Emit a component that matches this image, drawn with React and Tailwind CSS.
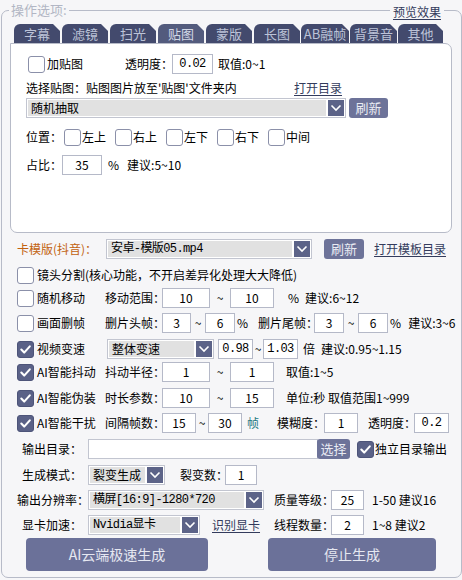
import React from "react";

const SANS = "font-['Noto_Sans_CJK_SC','Noto_Sans',sans-serif]";
const MONO = "font-['Liberation_Mono','Noto_Sans_CJK_SC',monospace] tracking-[-0.6px]";

function Check({ checked }) {
  if (checked) {
    return (
      <span className="flex h-[17px] w-[17px] shrink-0 items-center justify-center rounded-[3px] border border-[#4d5479] bg-[#5a6187]">
        <svg width="13" height="13" viewBox="0 0 13 13">
          <path d="M2.3 6.6 L5.2 9.6 L10.8 3.4" fill="none" stroke="#ffffff" strokeWidth="2.1" strokeLinecap="round" strokeLinejoin="round" />
        </svg>
      </span>
    );
  }
  return <span className="h-[17px] w-[17px] shrink-0 rounded-[3px] border-[1.5px] border-[#8b90a9] bg-white" />;
}

function Field({ w, mono, children }) {
  return (
    <span className={`flex h-[20px] shrink-0 items-center justify-center border border-[#b5b9c8] bg-white text-[12px] text-black ${w} ${mono ? MONO : ""}`}>
      {children}
    </span>
  );
}

function Chevron() {
  return (
    <svg width="12" height="8" viewBox="0 0 12 8">
      <path d="M1.5 1.5 L6 6 L10.5 1.5" fill="none" stroke="#ffffff" strokeWidth="1.6" />
    </svg>
  );
}

function Select({ w, mono, children }) {
  return (
    <span className={`flex h-[20px] shrink-0 border border-[#c2c5d0] bg-white p-px ${w}`}>
      <span className={`flex flex-1 items-center overflow-hidden bg-[#e1e1e1] pl-[3px] text-[12px] text-black ${mono ? MONO : ""}`}>
        {children}
      </span>
      <span className="ml-[2px] flex w-[16px] items-center justify-center bg-[#5c6388]">
        <Chevron />
      </span>
    </span>
  );
}

function SmallBtn({ w, children }) {
  return (
    <span className={`flex h-[20px] shrink-0 items-center justify-center rounded-[3px] bg-[#6d7399] text-[13px] text-[#e9ebf3] ${w}`}>
      {children}
    </span>
  );
}

function Link({ children }) {
  return <span className="text-[12px] text-[#333b5c] underline underline-offset-2">{children}</span>;
}

function Tilde({ w }) {
  return <span className={`shrink-0 text-center text-[12px] ${w}`}>~</span>;
}

function Label({ w, children }) {
  return <span className={`shrink-0 ${w}`}>{children}</span>;
}

const tabs = [
  { t: "字幕", c: "w-[46px]" },
  { t: "滤镜", c: "w-[46px]" },
  { t: "扫光", c: "w-[46px]" },
  { t: "贴图", c: "w-[46px]", on: true },
  { t: "蒙版", c: "w-[46px]" },
  { t: "长图", c: "w-[46px]" },
  { t: "AB融帧", c: "w-[48px] -ml-[1px]" },
  { t: "背景音", c: "w-[47px] -ml-[1px]" },
  { t: "其他", c: "w-[45px] -ml-[1px]" },
];

const spots = ["左上", "右上", "左下", "右下", "中间"];

export default function App() {
  return (
    <div className={`h-[580px] w-[462px] overflow-hidden whitespace-nowrap bg-[#f6f6f8] pl-px pt-[10px] text-black ${SANS}`}>
      <div className="relative h-[568px] w-[461px] rounded-[7px] border border-[#b7bbc8]">
        {/* group box captions sitting on the frame line */}
        <span className="absolute -top-[10px] left-[7px] bg-[#f6f6f8] px-[2px] text-[13px] leading-[18px] text-[#b2b6c4]">
          操作选项:
        </span>
        <span className="absolute -top-[10px] right-[17px] bg-[#f6f6f8] px-[3px] leading-[18px]">
          <Link>预览效果</Link>
        </span>

        {/* tab strip */}
        <div className="flex gap-[2px] pl-[12px] pt-[13px]">
          {tabs.map((tb) => (
            <span
              key={tb.t}
              className={`flex h-[19px] shrink-0 items-center justify-center rounded-tl-[6px] text-[13px] [clip-path:polygon(0_0,calc(100%_-_7px)_0,100%_7px,100%_100%,0_100%)] ${tb.c} ${
                tb.on ? "bg-[#535b7d] text-[#d2d7e6]" : "bg-[#434a6d] text-[#bcc3d8]"
              }`}
            >
              {tb.t}
            </span>
          ))}
        </div>

        {/* sticker tab page */}
        <div className="ml-[8px] h-[190px] w-[442px] rounded-b-[7px] rounded-tr-[7px] border border-[#b7bbc8] bg-white">
          <div className="mt-[10px] flex h-[20px] items-center pl-[17px] text-[12px]">
            <span className="flex w-[97px] shrink-0 items-center">
              <Check />
              <span className="ml-[2px]">加贴图</span>
            </span>
            <Label w="w-[47px]">透明度：</Label>
            <Field w="w-[41px]" mono>0.02</Field>
            <span className="ml-[5px]">取值:0~1</span>
          </div>

          <div className="mt-[4px] flex h-[20px] items-center pl-[15px] text-[12px]">
            <Label w="w-[268px]">选择贴图：贴图图片放至'贴图'文件夹内</Label>
            <Link>打开目录</Link>
          </div>

          <div className="flex h-[20px] items-center pl-[15px]">
            <Select w="w-[320px]">随机抽取</Select>
            <span className="ml-[3px]">
              <SmallBtn w="w-[39px]">刷新</SmallBtn>
            </span>
          </div>

          <div className="mt-[9px] flex h-[20px] items-center pl-[15px] text-[12px]">
            <Label w="w-[38px]">位置：</Label>
            {spots.map((s) => (
              <span key={s} className="flex w-[51px] shrink-0 items-center">
                <Check />
                <span className="ml-[1px]">{s}</span>
              </span>
            ))}
          </div>

          <div className="mt-[8px] flex h-[20px] items-center pl-[15px] text-[12px]">
            <Label w="w-[36px]">占比：</Label>
            <Field w="w-[40px]">35</Field>
            <span className="ml-[6px]">%</span>
            <span className="ml-[8px]">建议:5~10</span>
          </div>
        </div>

        {/* processing options */}
        <div className="pl-[15px] text-[12px]">
          <div className="mt-[6px] flex h-[20px] items-center">
            <Label w="w-[89px] text-[#c2620e]">卡模版(抖音)：</Label>
            <Select w="w-[206px]" mono>安卓-模版05.mp4</Select>
            <span className="ml-[12px]">
              <SmallBtn w="w-[40px]">刷新</SmallBtn>
            </span>
            <span className="ml-[10px]">
              <Link>打开模板目录</Link>
            </span>
          </div>

          <div className="mt-[6px] flex h-[20px] items-center">
            <Check />
            <span className="ml-[3px]">镜头分割(核心功能，不开启差异化处理大大降低)</span>
          </div>

          <div className="mt-[3px] flex h-[20px] items-center">
            <span className="flex w-[88px] shrink-0 items-center">
              <Check />
              <span className="ml-[3px]">随机移动</span>
            </span>
            <Label w="w-[57px]">移动范围：</Label>
            <Field w="w-[48px]">10</Field>
            <Tilde w="w-[20px]" />
            <Field w="w-[44px]">10</Field>
            <span className="ml-[14px]">%</span>
            <span className="ml-[6px]">建议:6~12</span>
          </div>

          <div className="mt-[5px] flex h-[20px] items-center">
            <span className="flex w-[88px] shrink-0 items-center">
              <Check />
              <span className="ml-[3px]">画面删帧</span>
            </span>
            <Label w="w-[57px]">删片头帧：</Label>
            <Field w="w-[29px]">3</Field>
            <Tilde w="w-[14px]" />
            <Field w="w-[30px]">6</Field>
            <span className="ml-[2px]">%</span>
            <Label w="ml-[10px] w-[56px]">删片尾帧：</Label>
            <Field w="w-[30px]">3</Field>
            <Tilde w="w-[14px]" />
            <Field w="w-[30px]">6</Field>
            <span className="ml-[2px]">%</span>
            <span className="ml-[7px]">建议:3~6</span>
          </div>

          <div className="mt-[6px] flex h-[20px] items-center">
            <span className="flex w-[90px] shrink-0 items-center">
              <Check checked />
              <span className="ml-[3px]">视频变速</span>
            </span>
            <Select w="w-[107px]">整体变速</Select>
            <span className="ml-[4px]">
              <Field w="w-[35px]" mono>0.98</Field>
            </span>
            <Tilde w="w-[10px]" />
            <Field w="w-[35px]" mono>1.03</Field>
            <span className="ml-[5px]">倍</span>
            <span className="ml-[6px]">建议:0.95~1.15</span>
          </div>

          <div className="mt-[3px] flex h-[20px] items-center">
            <span className="flex w-[88px] shrink-0 items-center">
              <Check checked />
              <span className="ml-[3px]">AI智能抖动</span>
            </span>
            <Label w="w-[57px]">抖动半径：</Label>
            <Field w="w-[48px]">1</Field>
            <Tilde w="w-[20px]" />
            <Field w="w-[44px]">1</Field>
            <span className="ml-[12px]">取值:1~5</span>
          </div>

          <div className="mt-[6px] flex h-[20px] items-center">
            <span className="flex w-[88px] shrink-0 items-center">
              <Check checked />
              <span className="ml-[3px]">AI智能伪装</span>
            </span>
            <Label w="w-[57px]">时长参数：</Label>
            <Field w="w-[48px]">10</Field>
            <Tilde w="w-[20px]" />
            <Field w="w-[44px]">15</Field>
            <span className="ml-[12px]">单位:秒 取值范围1~999</span>
          </div>

          <div className="mt-[5px] flex h-[20px] items-center">
            <span className="flex w-[88px] shrink-0 items-center">
              <Check checked />
              <span className="ml-[3px]">AI智能干扰</span>
            </span>
            <Label w="w-[57px]">间隔帧数：</Label>
            <Field w="w-[34px]">15</Field>
            <Tilde w="w-[12px]" />
            <Field w="w-[34px]">30</Field>
            <span className="ml-[5px] text-[#1f7a82]">帧</span>
            <Label w="ml-[18px] w-[47px]">模糊度：</Label>
            <Field w="w-[34px]">1</Field>
            <Label w="ml-[10px] w-[46px]">透明度：</Label>
            <Field w="w-[35px]" mono>0.2</Field>
          </div>

          <div className="mt-[6px] flex h-[20px] items-center">
            <Label w="w-[65px] text-right">输出目录：</Label>
            <span className="ml-[6px] flex">
              <span className="h-[20px] w-[230px] border border-[#c2c5d0] bg-white" />
              <span className="-ml-px">
                <SmallBtn w="w-[33px] rounded-[2px]">选择</SmallBtn>
              </span>
            </span>
            <span className="ml-[7px]">
              <Check checked />
            </span>
            <span className="ml-[1px]">独立目录输出</span>
          </div>

          <div className="mt-[6px] flex h-[20px] items-center">
            <Label w="w-[65px] text-right">生成模式：</Label>
            <span className="ml-[6px]">
              <Select w="w-[77px]">裂变生成</Select>
            </span>
            <Label w="ml-[15px] w-[45px]">裂变数：</Label>
            <Field w="w-[32px]">1</Field>
          </div>

          <div className="mt-[5px] flex h-[20px] items-center">
            <span className="flex w-[257px] shrink-0 items-center">
              <Label w="w-[65px] text-right">输出分辨率：</Label>
              <span className="ml-[6px]">
                <Select w="w-[176px]" mono>横屏[16:9]-1280*720</Select>
              </span>
            </span>
            <Label w="w-[57px]">质量等级：</Label>
            <Field w="w-[33px]">25</Field>
            <span className="ml-[8px]">1-50 建议16</span>
          </div>

          <div className="mt-[5px] flex h-[20px] items-center">
            <span className="flex w-[257px] shrink-0 items-center">
              <Label w="w-[65px] text-right">显卡加速：</Label>
              <span className="ml-[6px]">
                <Select w="w-[112px]" mono>Nvidia显卡</Select>
              </span>
              <span className="ml-[12px]">
                <Link>识别显卡</Link>
              </span>
            </span>
            <Label w="w-[57px]">线程数量：</Label>
            <Field w="w-[33px]">2</Field>
            <span className="ml-[8px]">1~8 建议2</span>
          </div>
        </div>

        <div className="mt-[3px] flex pl-[24px]">
          <span className="flex h-[33px] w-[182px] items-center justify-center rounded-[4px] bg-[#6b7199] text-[14px] text-[#e6e8f1]">
            AI云端极速生成
          </span>
          <span className="ml-[60px] flex h-[33px] w-[168px] items-center justify-center rounded-[4px] bg-[#6b7199] text-[14px] text-[#e6e8f1]">
            停止生成
          </span>
        </div>
      </div>
    </div>
  );
}
